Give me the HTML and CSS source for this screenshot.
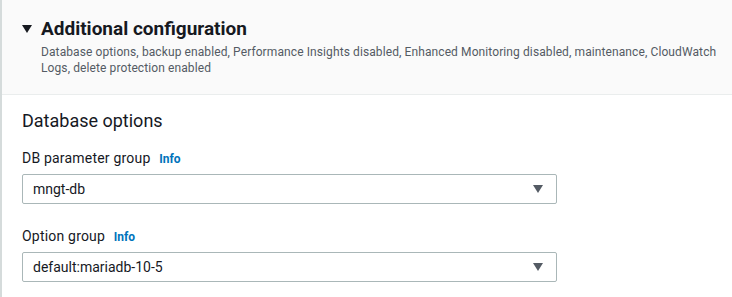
FILE: index.html
```html
<!DOCTYPE html>
<html lang="en">
<head>
  <meta charset="UTF-8" />
  <title>Additional configuration</title>
  <link rel="stylesheet" href="styles.css">
</head>
<body>
  <div class="panel">
    <div class="panel-header">
      <div class="title-row">
        <span class="caret"></span>
        <h2>Additional configuration</h2>
      </div>
      <p class="summary">Database options, backup enabled, Performance Insights disabled, Enhanced Monitoring disabled, maintenance, CloudWatch Logs, delete protection enabled</p>
    </div>

    <div class="panel-body">
      <h3>Database options</h3>

      <div class="field">
        <label>DB parameter group <a class="info">Info</a></label>
        <div class="select">
          <span>mngt-db</span>
          <span class="arrow"></span>
        </div>
      </div>

      <div class="field">
        <label>Option group <a class="info">Info</a></label>
        <div class="select">
          <span>default:mariadb-10-5</span>
          <span class="arrow"></span>
        </div>
      </div>
    </div>
  </div>
</body>
</html>
```

FILE: styles.css
```css
body {
  margin: 0;
  font-family: Roboto, "Liberation Sans", sans-serif;
  color: #16191f;
  background: #fff;
}

.panel {
  border-left: 2px solid #d5dbdb;
  height: 100vh;
  box-sizing: border-box;
}

.panel-header {
  background: #fafafa;
  border-bottom: 1px solid #eaeded;
  padding: 16px 8px 18px 20px;
}

.title-row {
  display: flex;
  align-items: center;
  gap: 9px;
}

.caret {
  width: 0;
  height: 0;
  border-left: 5px solid transparent;
  border-right: 5px solid transparent;
  border-top: 8px solid #16191f;
}

h2 {
  margin: 0;
  font-size: 19px;
  font-weight: bold;
  line-height: 26px;
}

.summary {
  margin: 2px 0 0 19px;
  font-size: 12px;
  line-height: 16px;
  letter-spacing: 0.1px;
  color: #545b64;
}

.panel-body {
  padding: 14px 20px 0 20px;
}

h3 {
  margin: 0 0 15px 0;
  font-size: 18px;
  font-weight: normal;
  line-height: 24px;
}

.field + .field {
  margin-top: 22px;
}

label {
  display: block;
  font-size: 14px;
  line-height: 20px;
  letter-spacing: 0.2px;
  margin-bottom: 5px;
}

.info {
  font-size: 12px;
  font-weight: bold;
  letter-spacing: 0;
  color: #0073bb;
  margin-left: 5px;
}

.select {
  width: 535px;
  height: 30px;
  box-sizing: border-box;
  border: 1px solid #aab7b8;
  border-radius: 2px;
  display: flex;
  align-items: center;
  justify-content: space-between;
  padding: 0 13px 0 10px;
  font-size: 14px;
}

.arrow {
  width: 0;
  height: 0;
  border-left: 5px solid transparent;
  border-right: 5px solid transparent;
  border-top: 8px solid #545b64;
}
```
